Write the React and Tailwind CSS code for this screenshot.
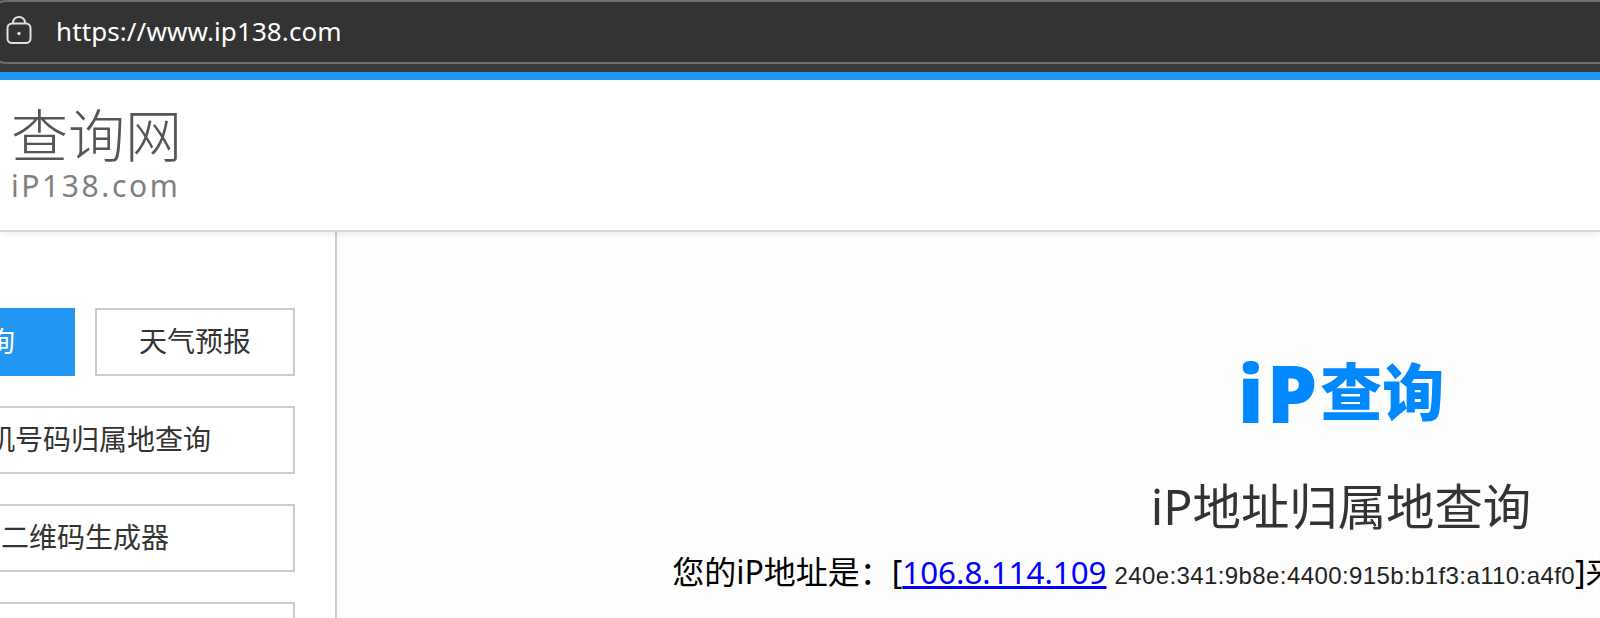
const cjk = { fontFamily: '"Noto Sans", "Noto Sans CJK SC", sans-serif' }

function LockIcon() {
  return (
    <svg width="26" height="28" viewBox="0 0 26 28" fill="none" stroke="#e0e0e0" strokeWidth="2" className="shrink-0 -mt-1">
      <path d="M7 8V6.5a6 5.5 0 0 1 12 0V8" />
      <rect x="1.5" y="7.5" width="23" height="19.5" rx="4.5" />
      <circle cx="13" cy="17.5" r="1.7" fill="#e0e0e0" stroke="none" />
    </svg>
  )
}

function NavButton({ children, active, className = '' }) {
  return (
    <div
      className={`flex items-center justify-center h-[68px] pb-[2px] text-[28px] ${active ? 'bg-[#2196f3] text-white' : 'bg-white border-2 border-[#cccccc] text-[#333333]'} ${className}`}
    >
      {children}
    </div>
  )
}

export default function App() {
  return (
    <div className="w-[1600px] h-[618px] overflow-hidden bg-[#fdfdfd] flex flex-col" style={cjk}>
      {/* Browser address bar */}
      <div className="h-[72px] shrink-0 bg-[#3b3b3b]">
        <div className="h-16 -ml-5 -mr-5 flex items-center gap-[24px] pl-[24px] bg-[#333333] border-2 border-[#6e6e6e] rounded-l-[28px] text-[26px] tracking-[0.1px] text-white">
          <LockIcon />
          <span className="-mt-px">https://www.ip138.com</span>
        </div>
      </div>

      {/* Page header */}
      <header className="h-[160px] shrink-0 bg-white border-t-8 border-[#2196f3] pl-[11px] pt-[21px] text-[#555555] border-b-2 border-b-[#d4d4d4] shadow-[0_2px_6px_rgba(0,0,0,0.08)] relative z-10">
        <div className="text-[57px] leading-[68px] font-light">查询网</div>
        <div className="text-[30px] leading-[33px] tracking-[2.6px] opacity-75">iP138.com</div>
      </header>

      <div className="flex flex-1 min-h-0">
        {/* Sidebar */}
        <aside className="w-[337px] shrink-0 bg-white border-r-2 border-[#cccccc] overflow-hidden">
          <div className="w-[420px] -ml-[125px] pt-[76px] flex flex-col gap-[30px]">
            <div className="flex gap-5">
              <NavButton active className="w-[200px]">iP查询</NavButton>
              <NavButton className="w-[200px]">天气预报</NavButton>
            </div>
            <NavButton>手机号码归属地查询</NavButton>
            <NavButton>二维码生成器</NavButton>
            <NavButton>邮政编码查询</NavButton>
          </div>
        </aside>

        {/* Main content */}
        <main className="w-[2008px] shrink-0 flex flex-col items-center pt-[120px] text-[#333333]">
          <div className="h-[80px] flex items-center font-black text-[#0088ff]">
            <span className="text-[80px] tracking-[3px]">iP</span>
            <span className="text-[62px]">查询</span>
          </div>
          <h1 className="mt-[42px] text-[48.4px] leading-[64px] font-normal">iP地址归属地查询</h1>
          <p className="mt-[12px] text-[32px] leading-[44px] whitespace-nowrap text-black">
            您的iP地址是：[
            <a href="#" className="text-[31.3px] text-[#0000ff] underline">106.8.114.109</a>
            <span className="text-[24px] tracking-[0.4px] ml-2 text-[#222222]" style={{ fontFamily: '"Liberation Sans", sans-serif' }}>240e:341:9b8e:4400:915b:b1f3:a110:a4f0</span>
            ]来自：中国河北省邯郸市 电信
          </p>
        </main>
      </div>
    </div>
  )
}
